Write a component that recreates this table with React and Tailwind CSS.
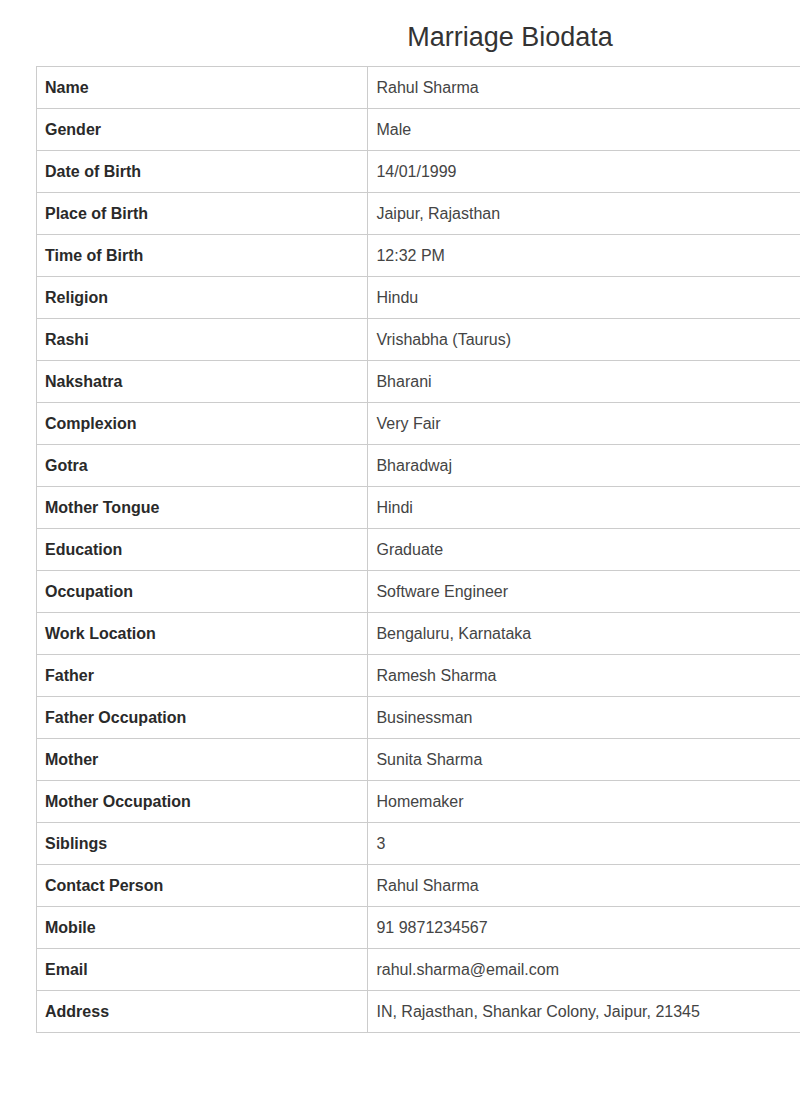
const rows = [
  ["Name", "Rahul Sharma"],
  ["Gender", "Male"],
  ["Date of Birth", "14/01/1999"],
  ["Place of Birth", "Jaipur, Rajasthan"],
  ["Time of Birth", "12:32 PM"],
  ["Religion", "Hindu"],
  ["Rashi", "Vrishabha (Taurus)"],
  ["Nakshatra", "Bharani"],
  ["Complexion", "Very Fair"],
  ["Gotra", "Bharadwaj"],
  ["Mother Tongue", "Hindi"],
  ["Education", "Graduate"],
  ["Occupation", "Software Engineer"],
  ["Work Location", "Bengaluru, Karnataka"],
  ["Father", "Ramesh Sharma"],
  ["Father Occupation", "Businessman"],
  ["Mother", "Sunita Sharma"],
  ["Mother Occupation", "Homemaker"],
  ["Siblings", "3"],
  ["Contact Person", "Rahul Sharma"],
  ["Mobile", "91 9871234567"],
  ["Email", "rahul.sharma@email.com"],
  ["Address", "IN, Rajasthan, Shankar Colony, Jaipur, 21345"],
];

export default function App() {
  return (
    <div className="w-[800px] h-[1100px] overflow-hidden bg-white">
      <div
        className="w-[1020px] px-[36px] pt-[22px]"
        style={{ fontFamily: '"Liberation Sans", Arial, sans-serif' }}
      >
        <h1 className="text-center text-[27px] leading-[31px] text-[#333] mb-[13px]">
          Marriage Biodata
        </h1>
        <table className="w-full border-collapse border border-[#cccccc] text-[16px] leading-[19px]">
          <tbody>
            {rows.map(([k, v]) => (
              <tr key={k}>
                <td className="w-[35%] border border-[#cccccc] px-[8px] py-[11px] font-bold text-[#2a2a2a]">
                  {k}
                </td>
                <td className="border border-[#cccccc] px-[8px] py-[11px] text-[#444]">
                  {v}
                </td>
              </tr>
            ))}
          </tbody>
        </table>
      </div>
    </div>
  );
}
